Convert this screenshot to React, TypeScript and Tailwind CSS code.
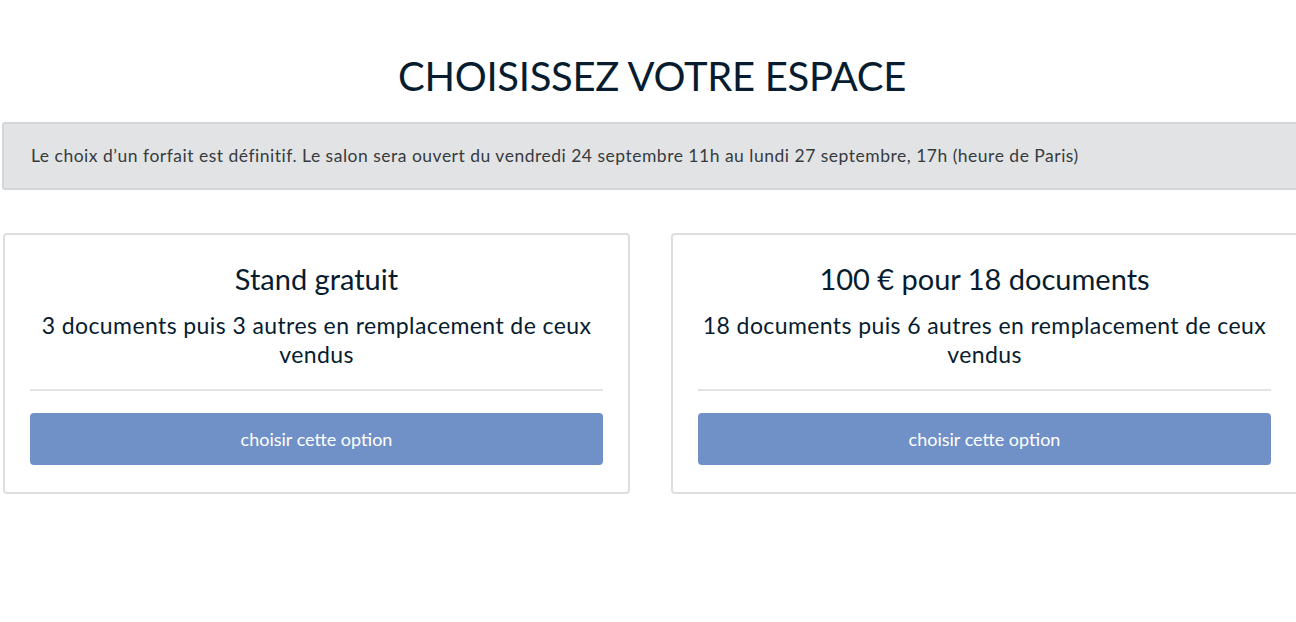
export default function App() {
  const plans = [
    {
      title: 'Stand gratuit',
      detail: '3 documents puis 3 autres en remplacement de ceux vendus',
    },
    {
      title: '100 € pour 18 documents',
      detail: '18 documents puis 6 autres en remplacement de ceux vendus',
    },
  ]

  return (
    <div className="w-screen min-h-screen overflow-hidden bg-white font-['Lato',sans-serif] text-[#071c2f]">
      <div className="ml-[2px] w-[1300px]">
        <h1 className="pt-[50px] text-center text-[40px] leading-[52px] tracking-[-0.3px]">
          CHOISISSEZ VOTRE ESPACE
        </h1>

        <div className="mt-[20px] h-[68px] flex items-center rounded-[3px] border-2 border-[#d5d6d8] bg-[#e2e3e5] px-[27px] text-[17.5px] tracking-[0.5px] text-[#363b40]">
          Le choix d’un forfait est définitif. Le salon sera ouvert du vendredi 24 septembre 11h au lundi 27 septembre, 17h (heure de Paris)
        </div>

        <div className="mt-[43px] flex gap-[41px] pl-px">
          {plans.map((p) => (
            <div
              key={p.title}
              className="w-[627px] h-[261px] shrink-0 rounded-[4px] border-2 border-[#dedede] px-[25px] pt-[26px] last:w-[631px] last:pr-[29px]"
            >
              <h2 className="text-center text-[29px] leading-[36px]">{p.title}</h2>
              <p className="mt-[14px] text-center text-[23px] leading-[29px] tracking-[0.4px]">{p.detail}</p>
              <hr className="mt-[20px] border-t-2 border-[#e4e4e4]" />
              <button className="mt-[22px] h-[52px] w-full rounded-[4px] bg-[#7090c8] text-[18px] text-white">
                choisir cette option
              </button>
            </div>
          ))}
        </div>
      </div>
    </div>
  )
}
